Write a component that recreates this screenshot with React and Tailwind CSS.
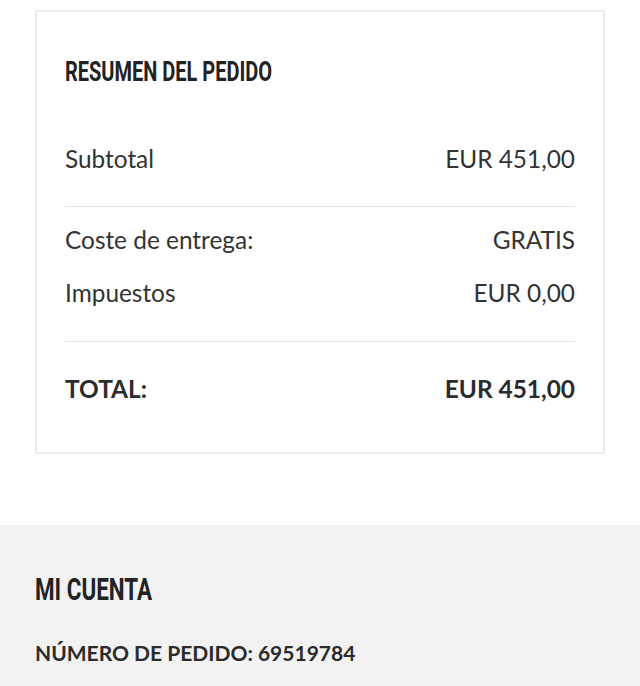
import React from 'react'

const rows = [
  { label: 'Coste de entrega:', value: 'GRATIS' },
  { label: 'Impuestos', value: 'EUR 0,00' },
]

function Row({ label, value, bold = false, className = '' }) {
  return (
    <div
      className={`flex h-[40px] items-center justify-between text-[24.4px] ${
        bold ? 'font-bold text-[#2b2b2b]' : 'text-[#333333]'
      } ${className}`}
    >
      <span>{label}</span>
      <span>{value}</span>
    </div>
  )
}

export default function App() {
  return (
    <div className="w-full bg-white font-['Lato','Liberation_Sans',sans-serif]">
      {/* ── Order summary card ─────────────────────────────── */}
      <div className="px-[35px] pt-[10px]">
        <div className="border-2 border-[#ececec] px-[28px] pt-[44px] pb-[43px]">
          <h2 className="h-[32px] whitespace-nowrap leading-[32px]">
            <span className="inline-block origin-left scale-x-[0.74] font-['Roboto',sans-serif] text-[27px] font-bold uppercase text-[#222222]">
              Resumen del pedido
            </span>
          </h2>

          <Row label="Subtotal" value="EUR 451,00" className="mt-[51px]" />
          <div className="mt-[27px] h-px bg-[#e3e3e3]" />

          <Row label={rows[0].label} value={rows[0].value} className="mt-[13px]" />
          <Row label={rows[1].label} value={rows[1].value} className="mt-[13px]" />
          <div className="mt-[28px] h-px bg-[#e3e3e3]" />

          <Row label="TOTAL:" value="EUR 451,00" bold className="mt-[27px]" />
        </div>
      </div>

      {/* ── My account ─────────────────────────────────────── */}
      <div className="mt-[71px] bg-[#f2f2f2] px-[35px] pt-[48px] pb-[19px]">
        <h2 className="h-[32px] whitespace-nowrap leading-[32px]">
          <span className="inline-block origin-left scale-x-[0.7] font-['Roboto',sans-serif] text-[32px] font-bold uppercase text-[#222222]">
            Mi cuenta
          </span>
        </h2>
        <p className="mt-[33px] h-[30px] text-[21px] font-bold leading-[30px] text-[#2b2b2b]">
          NÚMERO DE PEDIDO: 69519784
        </p>
      </div>
    </div>
  )
}
